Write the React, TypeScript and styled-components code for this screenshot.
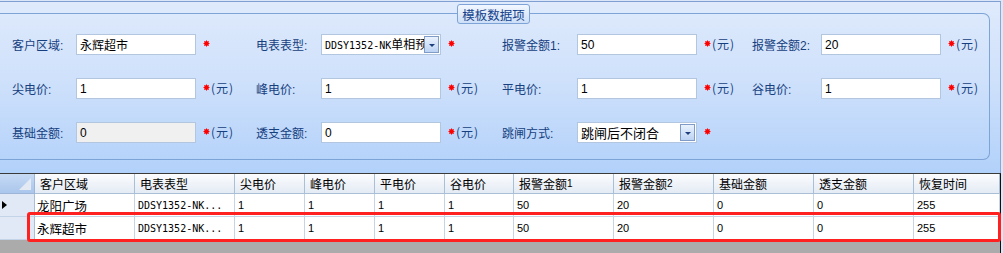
import styled, { createGlobalStyle } from "styled-components";

const GlobalStyle = createGlobalStyle`
  html, body {
    margin: 0;
    padding: 0;
  }
  body {
    width: 1003px;
    height: 253px;
    overflow: hidden;
    background: #dbe7f9;
    font-family: "Noto Sans CJK SC", "DejaVu Sans", sans-serif;
  }
`;

const CJK = `"Noto Sans CJK SC", "DejaVu Sans", sans-serif`;
const NUM = `"Liberation Sans", "Noto Sans CJK SC", sans-serif`;
const MONO = `"DejaVu Sans Mono", "Noto Sans CJK SC", monospace`;

const Screen = styled.div`
  width: 1003px;
  height: 253px;
  display: flex;
  flex-direction: column;
  overflow: hidden;
  background: #dbe7f9;
`;

const Panel = styled.div`
  width: 1001px;
  height: 172px;
  box-sizing: border-box;
  margin-top: 1px;
  padding: 11px 10px 0 0;
  border-top: 1px solid #7f9fd2;
  border-right: 1px solid #8aa6d0;
  background: linear-gradient(#dfeafc, #cfe1fb 45%, #b2d1fa);
`;

const GroupBox = styled.div`
  position: relative;
  border: 1px solid #7ea3d6;
  border-left: none;
  border-radius: 0 7px 7px 0;
  padding: 20px 0 16px 12px;
`;

const GroupTitle = styled.div`
  position: absolute;
  left: 457px;
  top: -10px;
  width: 73px;
  height: 20px;
  box-sizing: border-box;
  display: flex;
  align-items: center;
  justify-content: center;
  border: 1px solid #7ea3d6;
  border-radius: 3px;
  background: linear-gradient(#f3f7fe, #cddff8);
  color: #15428b;
  font-family: ${CJK};
  font-size: 12.5px;
`;

const FormGrid = styled.div`
  display: grid;
  grid-template-columns: 64px 120px 60px 65px 120px 61px 75px 120px 55px 69px 120px 1fr;
  grid-template-rows: repeat(3, 21px);
  row-gap: 23px;
  align-items: center;
`;

const Label = styled.div`
  color: #163f80;
  font-family: ${NUM};
  font-size: 12px;
  white-space: nowrap;
  & > span {
    font-family: ${CJK};
  }
`;

const TextBox = styled.div<{ $disabled?: boolean }>`
  height: 21px;
  box-sizing: border-box;
  display: flex;
  align-items: center;
  padding: 0 1px 0 3px;
  border: 1px solid #b2c6e0;
  background: ${({ $disabled }) => ($disabled ? "#f0f0f0" : "#fff")};
  color: #000;
  font-family: ${NUM};
  font-size: 12px;
  overflow: hidden;
  white-space: nowrap;
`;

const BoxText = styled.div<{ $size?: number }>`
  flex: 1;
  min-width: 0;
  overflow: hidden;
  font-family: ${CJK};
  font-size: ${({ $size }) => $size ?? 12}px;
  line-height: 19px;
  white-space: nowrap;
`;

const MonoPart = styled.span`
  font-family: ${MONO};
  font-size: 10px;
`;

const DropButton = styled.div`
  flex: none;
  width: 15px;
  height: 17px;
  box-sizing: border-box;
  display: flex;
  align-items: center;
  justify-content: center;
  border: 1px solid #7f9cc8;
  background: linear-gradient(#eaf2fd, #bcd3f3);
  &::after {
    content: "";
    margin-top: 2px;
    border-left: 3px solid transparent;
    border-right: 3px solid transparent;
    border-top: 3px solid #1d3f7e;
  }
`;

const Suffix = styled.div`
  display: flex;
  align-items: center;
  padding-left: 7px;
  padding-bottom: 2px;
  color: #163f80;
  font-family: ${CJK};
  font-size: 12px;
  white-space: nowrap;
`;

const Unit = styled.span`
  margin-left: 1px;
  letter-spacing: 1px;
`;

const starPoints = Array.from({ length: 16 }, (_, i) => {
  const a = (Math.PI * 2 * i) / 16 - Math.PI / 2;
  const r = i % 2 === 0 ? 3.5 : 2.1;
  return `${(3.5 + r * Math.cos(a)).toFixed(2)},${(3.5 + r * Math.sin(a)).toFixed(2)}`;
}).join(" ");

const Star = () => (
  <svg width="7" height="7" viewBox="0 0 7 7">
    <polygon points={starPoints} fill="#ff0000" />
  </svg>
);

const Required = ({ unit }: { unit?: boolean }) => (
  <Suffix>
    <Star />
    {unit && <Unit>(元)</Unit>}
  </Suffix>
);

const GridArea = styled.div`
  position: relative;
  flex: 1;
  width: 1001px;
  box-sizing: border-box;
  border-top: 1px solid #3a3a3a;
  border-right: 1px solid #111;
  background: #ababab;
`;

const GridRow = styled.div<{ $height: number }>`
  display: grid;
  grid-template-columns: 35px 100px 100px 70px 70px 70px 69px 100px 100px 100px 100px 1fr;
  height: ${({ $height }) => $height}px;
`;

const Corner = styled.div`
  position: relative;
  box-sizing: border-box;
  border-right: 1px solid #9db5d6;
  border-bottom: 1px solid #9db5d6;
  background: linear-gradient(#c6daf4, #aac6ec);
  &::after {
    content: "";
    position: absolute;
    right: 3px;
    bottom: 3px;
    border-left: 12px solid transparent;
    border-bottom: 12px solid #e3eaf3;
  }
`;

const HeaderCell = styled.div`
  box-sizing: border-box;
  display: flex;
  align-items: center;
  padding-left: 5px;
  border-right: 1px solid #a9bfd6;
  border-bottom: 1px solid #a9bfd6;
  background: linear-gradient(#fbfcfe, #e4ebf4);
  color: #000;
  font-family: ${CJK};
  font-size: 12px;
  white-space: nowrap;
  overflow: hidden;
  & > small {
    font-family: ${NUM};
    font-size: 10px;
  }
`;

const RowHead = styled.div<{ $current?: boolean }>`
  position: relative;
  box-sizing: border-box;
  border-right: 1px solid #a9bfd6;
  border-bottom: 1px solid #c3d3e8;
  background: #e1e9f6;
  &::after {
    content: "";
    display: ${({ $current }) => ($current ? "block" : "none")};
    position: absolute;
    left: 2px;
    top: 7px;
    border-top: 4px solid transparent;
    border-bottom: 4px solid transparent;
    border-left: 5px solid #000;
  }
`;

const Cell = styled.div<{ $kind: "text" | "mono" | "num" }>`
  box-sizing: border-box;
  display: flex;
  align-items: center;
  padding-left: ${({ $kind }) => ($kind === "text" ? 2 : 3)}px;
  border-right: 1px solid #c6d4e6;
  border-bottom: 1px solid #c6d4e6;
  background: #fff;
  color: #000;
  font-family: ${({ $kind }) => ($kind === "mono" ? MONO : $kind === "num" ? NUM : CJK)};
  font-size: ${({ $kind }) => ($kind === "mono" ? 10 : $kind === "num" ? 11 : 12.5)}px;
  white-space: nowrap;
  overflow: hidden;
`;

const Highlight = styled.div`
  position: absolute;
  left: 27px;
  top: 38px;
  width: 974px;
  height: 30px;
  box-sizing: border-box;
  border: 3px solid #ff2020;
  border-radius: 3px;
  pointer-events: none;
`;

const headers: [string, string?][] = [
  ["客户区域"],
  ["电表表型"],
  ["尖电价"],
  ["峰电价"],
  ["平电价"],
  ["谷电价"],
  ["报警金额", "1"],
  ["报警金额", "2"],
  ["基础金额"],
  ["透支金额"],
  ["恢复时间"],
];

const rows = [
  { current: true, cells: ["龙阳广场", "DDSY1352-NK...", "1", "1", "1", "1", "50", "20", "0", "0", "255"] },
  { current: false, cells: ["永辉超市", "DDSY1352-NK...", "1", "1", "1", "1", "50", "20", "0", "0", "255"] },
];

const kindOf = (i: number): "text" | "mono" | "num" => (i === 0 ? "text" : i === 1 ? "mono" : "num");

export default function App() {
  return (
    <>
      <GlobalStyle />
      <Screen>
        <Panel>
          <GroupBox>
            <GroupTitle>模板数据项</GroupTitle>
            <FormGrid>
              <Label><span>客户区域</span>:</Label>
              <TextBox><BoxText>永辉超市</BoxText></TextBox>
              <Required />
              <Label><span>电表表型</span>:</Label>
              <TextBox>
                <BoxText><MonoPart>DDSY1352-NK</MonoPart>单相预</BoxText>
                <DropButton />
              </TextBox>
              <Required />
              <Label><span>报警金额</span>1:</Label>
              <TextBox>50</TextBox>
              <Required unit />
              <Label><span>报警金额</span>2:</Label>
              <TextBox>20</TextBox>
              <Required unit />

              <Label><span>尖电价</span>:</Label>
              <TextBox>1</TextBox>
              <Required unit />
              <Label><span>峰电价</span>:</Label>
              <TextBox>1</TextBox>
              <Required unit />
              <Label><span>平电价</span>:</Label>
              <TextBox>1</TextBox>
              <Required unit />
              <Label><span>谷电价</span>:</Label>
              <TextBox>1</TextBox>
              <Required unit />

              <Label><span>基础金额</span>:</Label>
              <TextBox $disabled>0</TextBox>
              <Required unit />
              <Label><span>透支金额</span>:</Label>
              <TextBox>0</TextBox>
              <Required unit />
              <Label><span>跳闸方式</span>:</Label>
              <TextBox>
                <BoxText $size={13}>跳闸后不闭合</BoxText>
                <DropButton />
              </TextBox>
              <Required />
            </FormGrid>
          </GroupBox>
        </Panel>

        <GridArea>
          <GridRow $height={20}>
            <Corner />
            {headers.map(([text, digit], i) => (
              <HeaderCell key={i}>
                {text}
                {digit && <small>{digit}</small>}
              </HeaderCell>
            ))}
          </GridRow>
          {rows.map((row, r) => (
            <GridRow key={r} $height={23}>
              <RowHead $current={row.current} />
              {row.cells.map((value, i) => (
                <Cell key={i} $kind={kindOf(i)}>
                  {value}
                </Cell>
              ))}
            </GridRow>
          ))}
          <Highlight />
        </GridArea>
      </Screen>
    </>
  );
}
